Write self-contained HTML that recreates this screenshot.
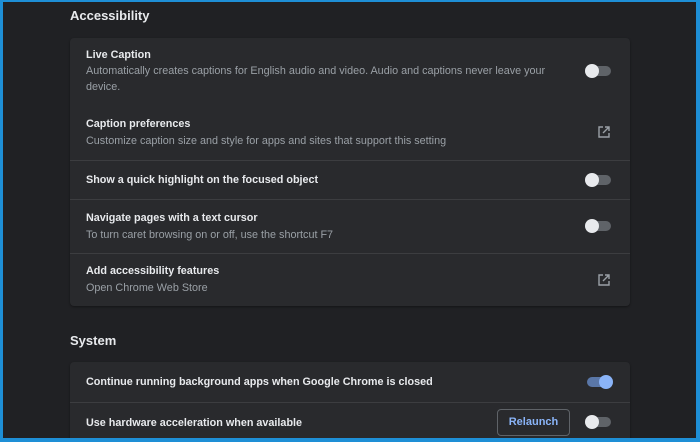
<!DOCTYPE html><html><head><style>
body{margin:0;width:700px;height:442px;overflow:hidden;background:#1e8fd6;font-family:"Liberation Sans",sans-serif;}
.f{position:absolute;left:3px;top:2px;width:693px;height:436px;background:#202124;overflow:hidden}
.h{position:absolute;left:67px;color:#e8eaed;font-size:13px;font-weight:bold}
.card{position:absolute;left:67px;width:560px;background:#292a2d;border-radius:4px;box-shadow:0 1px 2px rgba(0,0,0,.4)}
.r{position:relative;border-top:1px solid #3c3d40;box-sizing:border-box}
.r:first-child{border-top:none}
.t{position:absolute;left:16px;color:#e8eaed;font-size:10.8px;font-weight:bold}
.s{position:absolute;left:16px;color:#9aa0a6;font-size:10.8px;line-height:16px;width:470px}
.tg{position:absolute;left:517px;width:24px;height:10px;border-radius:5px;background:#5f6368}
.tg::after{content:"";position:absolute;left:-2px;top:-2px;width:14px;height:14px;border-radius:50%;background:#e8eaed}
.tg.on{background:#5a77a8}.tg.on::after{left:12px;background:#8ab4f8}
.ic{position:absolute;left:528px}
</style></head><body><div class="f">
<div class="h" style="top:6px">Accessibility</div>
<div class="card" style="top:36px">
<div class="r" style="height:67px"><div class="t" style="top:11px">Live Caption</div><div class="s" style="top:25px">Automatically creates captions for English audio and video. Audio and captions never leave your device.</div><div class="tg" style="top:28px"></div></div>
<div class="r" style="height:55px;border-top:none"><div class="t" style="top:13px">Caption preferences</div><div class="s" style="top:28px">Customize caption size and style for apps and sites that support this setting</div><svg class="ic" style="top:21px" width="12" height="12" viewBox="0 0 12 12" fill="none" stroke="#9aa0a6" stroke-width="1.4"><path d="M5 1H1v10h10V7M7 1h4v4M11 1L5 7"/></svg></div>
<div class="r" style="height:39px"><div class="t" style="top:13px">Show a quick highlight on the focused object</div><div class="tg" style="top:14px"></div></div>
<div class="r" style="height:54px"><div class="t" style="top:12px">Navigate pages with a text cursor</div><div class="s" style="top:27px">To turn caret browsing on or off, use the shortcut F7</div><div class="tg" style="top:21px"></div></div>
<div class="r" style="height:53px"><div class="t" style="top:11px">Add accessibility features</div><div class="s" style="top:26px">Open Chrome Web Store</div><svg class="ic" style="top:20px" width="12" height="12" viewBox="0 0 12 12" fill="none" stroke="#9aa0a6" stroke-width="1.4"><path d="M5 1H1v10h10V7M7 1h4v4M11 1L5 7"/></svg></div>
</div>
<div class="h" style="top:331px">System</div>
<div class="card" style="top:360px;height:90px">
<div class="r" style="height:40px"><div class="t" style="top:14px">Continue running background apps when Google Chrome is closed</div><div class="tg on" style="top:15px"></div></div>
<div class="r" style="height:40px"><div class="t" style="top:14px">Use hardware acceleration when available</div><div style="position:absolute;left:427px;top:6px;width:71px;height:25px;border:1px solid #5f6368;border-radius:4px;color:#8ab4f8;font-size:11px;font-weight:bold;text-align:center;line-height:25px">Relaunch</div><div class="tg" style="top:14px"></div></div>
</div>
</div></body></html>
